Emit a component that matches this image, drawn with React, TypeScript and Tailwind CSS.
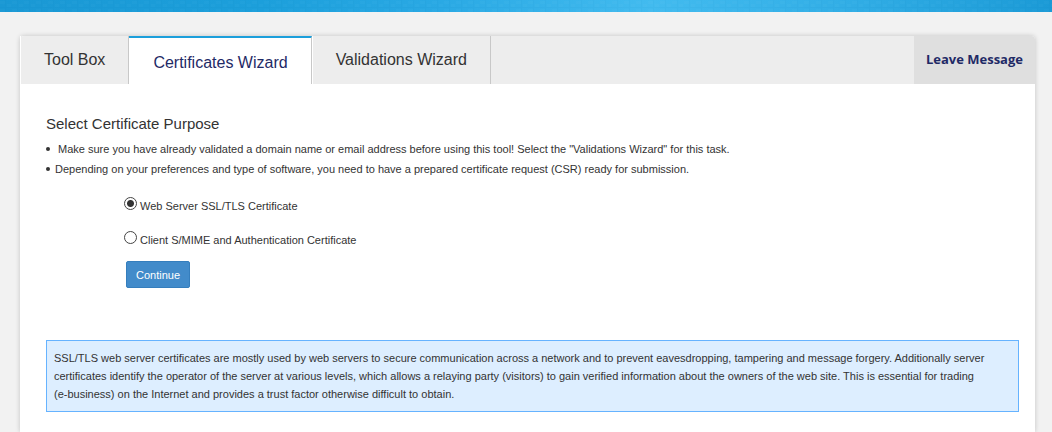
import { useState } from "react";

const tabs = ["Tool Box", "Certificates Wizard", "Validations Wizard"];

const purposes = [
  { id: "server", label: "Web Server SSL/TLS Certificate" },
  { id: "client", label: "Client S/MIME and Authentication Certificate" },
];

function BannerTexture() {
  return (
    <svg aria-hidden="true" className="block h-full w-full">
      <defs>
        <linearGradient id="banner" x1="0" x2="1" y1="0" y2="0">
          <stop offset="0" stopColor="#1a98d4" />
          <stop offset="0.25" stopColor="#1c9fdb" />
          <stop offset="0.42" stopColor="#2aa9e4" />
          <stop offset="0.62" stopColor="#42bbef" />
          <stop offset="0.8" stopColor="#32aee6" />
          <stop offset="1" stopColor="#1b9ad6" />
        </linearGradient>
        <pattern id="weave" width="12" height="8" patternUnits="userSpaceOnUse">
          <path d="M0 1h5v3H0zM7 4h4v3H7z" fill="#fff" fillOpacity="0.02" />
          <path d="M5 0h1v8H5zM0 7h12v1H0z" fill="#005c99" fillOpacity="0.04" />
        </pattern>
      </defs>
      <rect width="100%" height="100%" fill="url(#banner)" />
      <rect width="100%" height="100%" fill="url(#weave)" />
    </svg>
  );
}

export default function App() {
  const [active, setActive] = useState("Certificates Wizard");
  const [purpose, setPurpose] = useState("server");

  return (
    <div className="flex min-h-screen flex-col bg-[#f2f2f2] font-['Liberation_Sans',Arial,sans-serif] text-[11px] text-[#333333]">
      <header className="h-3 bg-[#1c9fdb]">
        <BannerTexture />
      </header>

      <main className="mt-6 mr-[17px] ml-5 flex-1 rounded-t-sm bg-white shadow-[0_0_5px_rgba(0,0,0,0.2)]">
        <nav className="flex h-12 rounded-t-sm bg-[#ededed]">
          {tabs.map((tab) => (
            <button
              key={tab}
              type="button"
              onClick={() => setActive(tab)}
              className={
                tab === active
                  ? "border-t-2 border-r border-t-[#1c9fdb] border-r-[#c8c8c8] bg-white pt-1 pr-[23px] pl-6 text-base text-[#1f2a66]"
                  : "border-r border-l border-r-[#c8c8c8] border-l-white px-[23px] text-base text-[#333333]"
              }
            >
              {tab}
            </button>
          ))}
          <a
            href="#message"
            className="ml-auto flex items-center rounded-tr-sm bg-[#dfdfdf] px-3 font-['Open_Sans',sans-serif] text-[13px] font-bold text-[#1f2a66]"
          >
            Leave Message
          </a>
        </nav>

        <section className="px-4 pt-[30px] pb-5 pl-[26px]">
          <h1 className="text-[15px] leading-5">Select Certificate Purpose</h1>
          <ul className="mt-[5px] leading-5">
            <li className="flex items-center gap-2">
              <span aria-hidden="true" className="size-1 rounded-full bg-[#333333]" />
              Make sure you have already validated a domain name or email address before using this tool! Select the
              "Validations Wizard" for this task.
            </li>
            <li className="flex items-center gap-[5px]">
              <span aria-hidden="true" className="size-1 rounded-full bg-[#333333]" />
              Depending on your preferences and type of software, you need to have a prepared certificate request (CSR)
              ready for submission.
            </li>
          </ul>

          <form className="mt-[13px] ml-[78px]" onSubmit={(event) => event.preventDefault()}>
            {purposes.map(({ id, label }) => (
              <div key={id} className="flex h-[34px] items-start gap-[3px]">
                <input
                  id={id}
                  type="radio"
                  name="purpose"
                  checked={purpose === id}
                  onChange={() => setPurpose(id)}
                  className="mt-[5px] size-[13px] appearance-none rounded-full border border-[#444444] bg-white checked:bg-[radial-gradient(circle,#333333_0_3px,#ffffff_4px)]"
                />
                <label htmlFor={id} className="pt-1 leading-5">
                  {label}
                </label>
              </div>
            ))}
            <button
              type="submit"
              className="mt-px ml-0.5 block h-[27px] rounded-xs border border-[#357ebd] bg-[#428bca] px-[9px] pt-px text-[11px] text-white"
            >
              Continue
            </button>
          </form>

          <p className="mt-[52px] border border-[#66b3ff] bg-[#ddeeff] px-[7px] py-2 leading-[18px]">
            SSL/TLS web server certificates are mostly used by web servers to secure communication across a network and
            to prevent eavesdropping, tampering and message forgery. Additionally server certificates identify the
            operator of the server at various levels, which allows a relaying party (visitors) to gain verified
            information about the owners of the web site. This is essential for trading{" "}
            <span className="whitespace-nowrap">(e-business)</span> on the Internet and provides a trust factor
            otherwise difficult to obtain.
          </p>
        </section>
      </main>
    </div>
  );
}
